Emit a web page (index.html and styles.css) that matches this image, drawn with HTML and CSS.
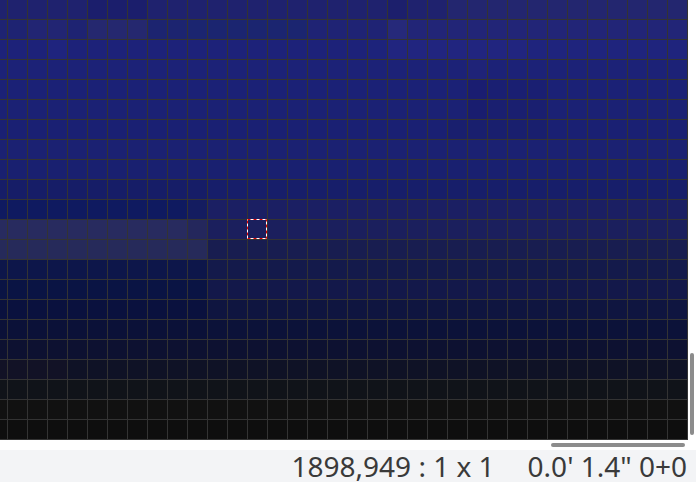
FILE: index.html
```html
<!DOCTYPE html>
<html>
<head>
<meta charset="utf-8">
<link rel="stylesheet" href="styles.css">
</head>
<body>
<div class="viewer">
  <div class="view-row">
    <div class="canvas" id="canvas">
      <svg class="marquee" width="20" height="20" viewBox="0 0 20 20">
        <rect x="0.5" y="0.5" width="19" height="19" fill="none" stroke="#ffffff" stroke-width="1"/>
        <rect x="0.5" y="0.5" width="19" height="19" fill="none" stroke="#e00000" stroke-width="1" stroke-dasharray="3 3"/>
      </svg>
    </div>
    <div class="vtrack"><div class="vthumb"></div></div>
  </div>
  <div class="htrack"><div class="hthumb"></div></div>
  <div class="status"><span class="coords">1898,949 : 1 x 1</span><span class="meta">0.0' 1.4" 0+0</span></div>
</div>
<script src="script.js"></script>
</body>
</html>
```
FILE: styles.css
```css
html, body {
  margin: 0;
  padding: 0;
  background: #ffffff;
}
body {
  width: 696px;
  height: 482px;
  overflow: hidden;
  font-family: "Noto Sans", "Open Sans", sans-serif;
}
.viewer {
  display: flex;
  flex-direction: column;
  width: 696px;
  height: 482px;
}
.view-row {
  display: flex;
  height: 440px;
}
.canvas {
  position: relative;
  width: 687px;
  height: 439px;
  padding: 0 1px 1px 0;
  background: #333333;
  display: grid;
  grid-template-columns: 7px repeat(34, 19px);
  grid-auto-rows: 19px;
  gap: 1px;
}
.cell {
  display: block;
}
.marquee {
  position: absolute;
  left: 247px;
  top: 219px;
  display: block;
}
.vtrack {
  width: 8px;
  background: #ffffff;
  padding: 353px 0 0 2px;
  box-sizing: border-box;
}
.vthumb {
  width: 4px;
  height: 82px;
  border-radius: 2px;
  background: #8c8c8c;
}
.htrack {
  height: 10px;
  background: #ffffff;
  display: flex;
  justify-content: flex-end;
  align-items: flex-start;
  padding: 3px 11px 0 0;
  box-sizing: border-box;
}
.hthumb {
  width: 134px;
  height: 4px;
  border-radius: 2px;
  background: #8c8c8c;
}
.status {
  flex: 1;
  background: #f3f4f6;
  display: flex;
  justify-content: flex-end;
  gap: 33px;
  padding-right: 9px;
  font-size: 28px;
  line-height: 32px;
  color: #3a3a3a;
  white-space: pre;
}
```
FILE: script.js
```js
(function () {
  var rows = [
    ["#1f226e", [[5, 7, "#1b1e6c"], [20, 20, "#1c1f6c"], [23, 34, "#23266f"]]],
    ["#1e2372", [[2, 3, "#222573"], [5, 7, "#25286f"], [8, 9, "#1c2470"], [10, 15, "#1b2570"], [16, 19, "#1f2374"], [20, 20, "#26297a"], [21, 34, "#222577"]]],
    ["#1d2279", [[3, 3, "#1f247e"], [19, 19, "#1d237b"], [20, 26, "#21257f"], [27, 34, "#1f247d"]]],
    ["#1c2277", [[24, 24, "#1f2378"]]],
    ["#1b2176", [[24, 27, "#1a1f72"], [24, 24, "#1a1d71"]]],
    ["#1b2174", [[24, 27, "#1a1f70"], [24, 24, "#191d6f"]]],
    ["#1a2073", [[23, 27, "#191f6e"]]],
    ["#1b2172", []],
    ["#192070", []],
    ["#171e6a", [[0, 10, "#161d67"]]],
    ["#1b1f63", [[0, 9, "#0f1a60"], [10, 10, "#141c60"]]],
    ["#1b1f5d", [[0, 9, "#282b5f"], [10, 10, "#24275c"]]],
    ["#181d50", [[0, 10, "#262a5a"]]],
    ["#141a4b", [[0, 10, "#0d164a"]]],
    ["#13184a", [[0, 10, "#0a1444"]]],
    ["#0f1540", [[0, 10, "#0a113e"]]],
    ["#0c1239", [[0, 10, "#0b1138"]]],
    ["#0d1131", []],
    ["#0f1226", [[0, 3, "#121226"]]],
    ["#101319", []],
    ["#111111", []],
    ["#0e0e0e", []]
  ];
  var canvas = document.getElementById("canvas");
  var marquee = canvas.querySelector(".marquee");
  var frag = document.createDocumentFragment();
  rows.forEach(function (row) {
    var colors = [];
    for (var c = 0; c < 35; c++) colors.push(row[0]);
    row[1].forEach(function (seg) {
      for (var i = seg[0]; i <= seg[1]; i++) colors[i] = seg[2];
    });
    colors.forEach(function (col) {
      var d = document.createElement("div");
      d.className = "cell";
      d.style.background = col;
      frag.appendChild(d);
    });
  });
  canvas.insertBefore(frag, marquee);
})();
```
